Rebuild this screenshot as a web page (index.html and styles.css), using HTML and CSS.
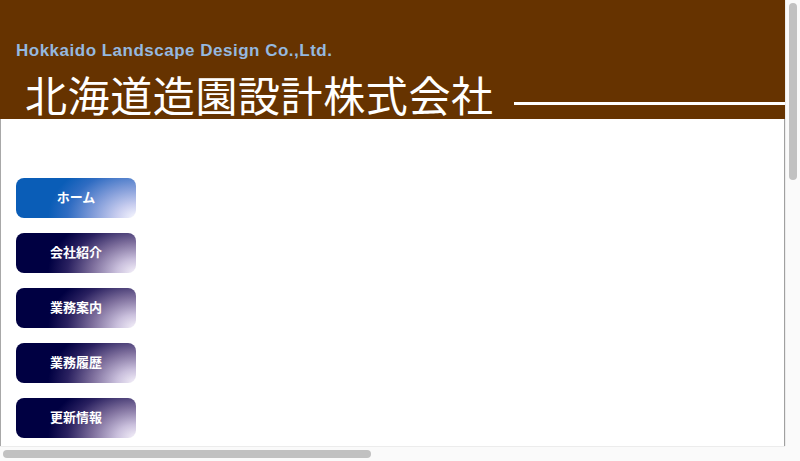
FILE: index.html
```html
<!DOCTYPE html>
<html lang="ja">
<head>
<meta charset="utf-8">
<title>北海道造園設計株式会社</title>
<link rel="stylesheet" href="styles.css">
</head>
<body>
<header class="header">
  <p class="header-en">Hokkaido Landscape Design Co.,Ltd.</p>
  <div class="header-title-row">
    <h1 class="header-title">北海道造園設計株式会社</h1>
    <span class="header-rule"></span>
  </div>
</header>
<main class="main">
  <nav class="menu">
    <a class="menu-btn menu-btn-active" href="#">ホーム</a>
    <a class="menu-btn" href="#">会社紹介</a>
    <a class="menu-btn" href="#">業務案内</a>
    <a class="menu-btn" href="#">業務履歴</a>
    <a class="menu-btn" href="#">更新情報</a>
  </nav>
</main>
<div class="scroll-v"><div class="scroll-v-thumb"></div></div>
<div class="scroll-h"><div class="scroll-h-thumb"></div></div>
<div class="scroll-corner"></div>
</body>
</html>
```
FILE: styles.css
```css
html, body {
  margin: 0;
  padding: 0;
  background: #ffffff;
  overflow: hidden;
  height: 100%;
}

body {
  font-family: "Liberation Sans", Arial, "Noto Sans CJK JP", sans-serif;
}

.header {
  background: #663300;
  padding-top: 42px;
}

.header-en {
  margin: 0 0 0 16px;
  font-family: "Liberation Sans", Arial, sans-serif;
  font-weight: bold;
  font-size: 17px;
  letter-spacing: 0.5px;
  line-height: 18px;
  color: #95b8df;
  white-space: nowrap;
}

.header-title-row {
  display: flex;
  align-items: flex-start;
  margin-top: 9px;
  padding-left: 25px;
}

.header-title {
  margin: 0;
  font-family: "Noto Sans CJK JP", "Noto Sans CJK SC", sans-serif;
  font-weight: normal;
  font-size: 42px;
  letter-spacing: 0.6px;
  line-height: 50px;
  color: #ffffff;
  white-space: nowrap;
  flex: none;
}

.header-rule {
  display: block;
  flex: 1 0 200px;
  height: 3px;
  margin-top: 33px;
  margin-left: 20px;
  background: #ffffff;
}

.main {
  border-left: 1px solid #a8a8a8;
  border-right: 1px solid #a0a0a0;
  margin-right: 15px;
  height: calc(100% - 119px);
  box-sizing: border-box;
  padding-top: 59px;
  padding-left: 15px;
}

.menu {
  display: flex;
  flex-direction: column;
  gap: 15px;
}

.menu-btn {
  display: flex;
  align-items: center;
  justify-content: center;
  box-sizing: border-box;
  width: 120px;
  height: 40px;
  padding-bottom: 3px;
  border-radius: 8px;
  font-family: "Noto Sans CJK JP", "Noto Sans CJK SC", sans-serif;
  font-weight: bold;
  font-size: 13px;
  color: #ffffff;
  text-decoration: none;
  background: radial-gradient(ellipse 88px 62px at 100% 100%, #f6f2fb 0%, #c9bfdc 22%, #7d6e9c 50%, #2a2160 78%, #000042 100%);
  background-color: #000042;
}

.menu-btn-active {
  background: radial-gradient(ellipse 88px 62px at 100% 100%, #f8f8ff 0%, #c8cdef 22%, #7e9ad8 50%, #2f6cc2 78%, #0a5db7 100%);
  background-color: #0a5db7;
}

/* browser scrollbars as seen in the screenshot */
.scroll-v {
  position: fixed;
  top: 0;
  right: 0;
  width: 15px;
  height: 446px;
  box-sizing: border-box;
  background: #fafafa;
  border-left: 1px solid #ececec;
}

.scroll-v-thumb {
  position: absolute;
  top: 3px;
  left: 3px;
  width: 8px;
  height: 177px;
  border-radius: 4px;
  background: #c1c1c1;
}

.scroll-h {
  position: fixed;
  left: 0;
  bottom: 0;
  width: 785px;
  height: 15px;
  box-sizing: border-box;
  background: #fafafa;
  border-top: 1px solid #ececec;
}

.scroll-h-thumb {
  position: absolute;
  left: 3px;
  top: 3px;
  width: 368px;
  height: 8px;
  border-radius: 4px;
  background: #c1c1c1;
}

.scroll-corner {
  position: fixed;
  right: 0;
  bottom: 0;
  width: 15px;
  height: 15px;
  background: #fafafa;
}
```
